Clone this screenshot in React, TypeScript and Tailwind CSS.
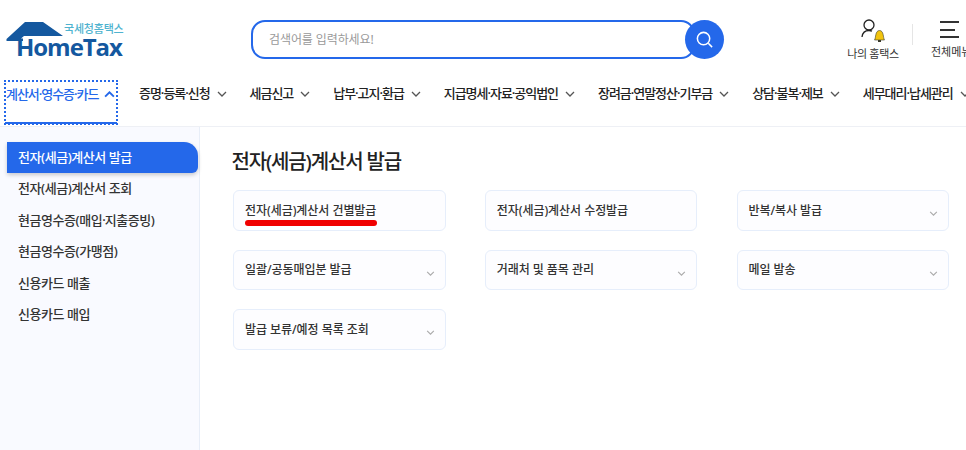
import React from "react";

const navItems = [
  "증명·등록·신청",
  "세금신고",
  "납부·고지·환급",
  "지급명세·자료·공익법인",
  "장려금·연말정산·기부금",
  "상담·불복·제보",
  "세무대리·납세관리",
];

const sideItems = [
  "전자(세금)계산서 조회",
  "현금영수증(매입·지출증빙)",
  "현금영수증(가맹점)",
  "신용카드 매출",
  "신용카드 매입",
];

const cardRows = [
  ["전자(세금)계산서 건별발급", "전자(세금)계산서 수정발급", "반복/복사 발급"],
  ["일괄/공동매입분 발급", "거래처 및 품목 관리", "메일 발송"],
  ["발급 보류/예정 목록 조회"],
];

// the dots in the menu labels sit much tighter than the font's own width
function Dotted({ text }: { text: string }) {
  const parts = text.split("·");
  return (
    <span>
      {parts.map((p, i) => (
        <React.Fragment key={p}>
          {p}
          {i < parts.length - 1 && <span className="tracking-[-1px]">·</span>}
        </React.Fragment>
      ))}
    </span>
  );
}

function Chevron({ up, className }: { up?: boolean; className: string }) {
  return (
    <svg viewBox="0 0 10 6" fill="none" className={className}>
      <path
        d={up ? "M1 5 L5 1 L9 5" : "M1 1 L5 5 L9 1"}
        stroke="currentColor"
        strokeWidth={up ? "1.7" : "1.3"}
      />
    </svg>
  );
}

function Logo() {
  return (
    <div className="relative w-[125px] h-[40px]">
      <svg viewBox="0 0 125 40" className="absolute inset-0 w-[125px] h-[40px]">
        <path
          d="M0.5 18 L19 1 L37 1 L57 15 L18 15 L15 17.5 L17 17.5 L17 20 L0.5 20 Z"
          fill="#14589f"
        />
      </svg>
      <span className="absolute left-[58px] top-[1px] text-[11px] leading-[14px] text-[#4fb3cf] font-medium tracking-[-0.2px] whitespace-nowrap">
        국세청홈택스
      </span>
      <span className="absolute left-[10px] top-[17px] text-[24px] leading-[18px] font-bold text-[#14589f] font-['Open_Sans',sans-serif] tracking-[-1.05px]">
        HomeTax
      </span>
    </div>
  );
}

export default function App() {
  return (
    <div className="w-[966px] h-[450px] overflow-hidden bg-white font-['Noto_Sans','Noto_Sans_CJK_KR',sans-serif] text-[#222]">
      <header className="h-[127px] border-b border-[#eef0f5]">
        <div className="h-[80px] flex items-start">
          <div className="pl-[6px] pt-[21px] w-[251px] shrink-0">
            <Logo />
          </div>
          <div className="pt-[20px] flex shrink-0">
            <div className="w-[444px] h-[39px] rounded-[14px] border-2 border-[#2468ea] flex items-center pl-[16px] text-[12px] tracking-[-0.1px] text-[#999]">
              검색어를 입력하세요!
            </div>
            <div className="w-[39px] h-[39px] rounded-full bg-[#2468ea] flex items-center justify-center -ml-[10px]">
              <svg viewBox="0 0 20 20" fill="none" className="w-[19px] h-[19px]">
                <circle cx="9" cy="9" r="6.5" stroke="white" strokeWidth="1.6" />
                <path d="M14 14 L18 18" stroke="white" strokeWidth="1.6" />
              </svg>
            </div>
          </div>
          <div className="ml-[123px] pt-[19px] w-[52px] flex flex-col items-center shrink-0">
            <svg viewBox="0 0 26 24" fill="none" className="w-[26px] h-[24px]">
              <circle cx="9" cy="6" r="5" stroke="#222" strokeWidth="1.3" />
              <path d="M2 18 C2.5 14 5 11.5 9 11.5 C10 11.5 11 11.7 12 12.2" stroke="#222" strokeWidth="1.3" />
              <path d="M14.5 21 C16 19 15 11.5 19.5 11.5 C24 11.5 23 19 24.5 21 Z" fill="#f2c40f" stroke="#3a3a2a" strokeWidth="0.6" />
              <rect x="18" y="21" width="3" height="2" fill="#3a3a2a" />
            </svg>
            <span className="text-[11px] leading-[14px] mt-[4px] whitespace-nowrap tracking-[-0.3px] text-[#333]">나의 홈택스</span>
          </div>
          <div className="ml-[13px] mt-[24px] w-px h-[21px] bg-[#e5e5e5] shrink-0" />
          <div className="ml-[18px] pt-[21px] flex flex-col shrink-0">
            <div className="ml-[9px] w-[19px] h-[17px] flex flex-col justify-between">
              <div className="h-[2px] bg-[#333]" />
              <div className="h-[2px] w-[15px] bg-[#333]" />
              <div className="h-[2px] bg-[#333]" />
            </div>
            <span className="text-[11px] leading-[14px] mt-[7px] whitespace-nowrap text-[#333]">전체메뉴</span>
          </div>
        </div>
        <nav className="flex items-start h-[46px]">
          <div className="ml-[4px] w-[114px] h-[45px] border-2 border-dotted border-[#2468ea] relative shrink-0">
            <div className="flex items-center h-[21px] mt-[2px] text-[13px] text-[#2468ea] font-medium tracking-[-1.05px] whitespace-nowrap">
              <Dotted text="계산서·영수증·카드" />
              <Chevron up className="w-[11px] h-[7px] ml-[6px]" />
            </div>
            <div className="absolute -left-[1px] -right-[1px] -bottom-[1px] h-[2px] bg-[#2468ea]" />
          </div>
          <div className="flex items-center ml-[21px] gap-[23px] mt-[3px] h-[21px] whitespace-nowrap">
            {navItems.map((item) => (
              <div key={item} className="flex items-center gap-[7px] text-[13px] font-medium tracking-[-1.05px] text-[#222]">
                <Dotted text={item} />
                <Chevron className="w-[10px] h-[6px] text-[#555]" />
              </div>
            ))}
          </div>
        </nav>
      </header>
      <div className="flex h-[323px]">
        <aside className="w-[200px] shrink-0 bg-[#f9faff] border-r border-[#e8eef8] pt-[15px] pl-[7px] text-[13px] font-medium text-[#333] tracking-[-0.45px]">
          <div className="h-[31px] w-[191px] rounded-tr-[14px] rounded-br-[6px] bg-[#2468ea] text-white flex items-center pl-[11px] shadow-[0_2px_4px_rgba(0,0,0,0.2)]">
            전자(세금)계산서 발급
          </div>
          {sideItems.map((s) => (
            <div key={s} className="h-[31.5px] flex items-center pl-[11px] whitespace-nowrap">
              <Dotted text={s} />
            </div>
          ))}
        </aside>
        <main className="pl-[31.5px] pt-[21px] flex-1">
          <h1 className="text-[20px] leading-[28px] font-medium text-[#222] tracking-[-1.15px]">전자(세금)계산서 발급</h1>
          <div className="mt-[14px] flex flex-col gap-[19px]">
            {cardRows.map((row) => (
              <div key={row[0]} className="flex gap-[39.25px] pl-[1.5px]">
                {row.map((c) => (
                  <div
                    key={c}
                    className="relative w-[212.5px] h-[40.5px] rounded-[6px] border border-[#e6eefb] bg-[#fdfdff] flex items-center pl-[11px] pt-[1px] text-[12px] font-medium text-[#333] tracking-[-0.05px]"
                  >
                    {c}
                    {c === "전자(세금)계산서 건별발급" && (
                      <div className="absolute left-[11px] top-[29px] w-[132px] h-[6px] rounded-full bg-[#f00000]" />
                    )}
                    {!c.startsWith("전자") && (
                      <Chevron className="absolute right-[10px] top-[20px] w-[9px] h-[5px] text-[#aaa]" />
                    )}
                  </div>
                ))}
              </div>
            ))}
          </div>
        </main>
      </div>
    </div>
  );
}
